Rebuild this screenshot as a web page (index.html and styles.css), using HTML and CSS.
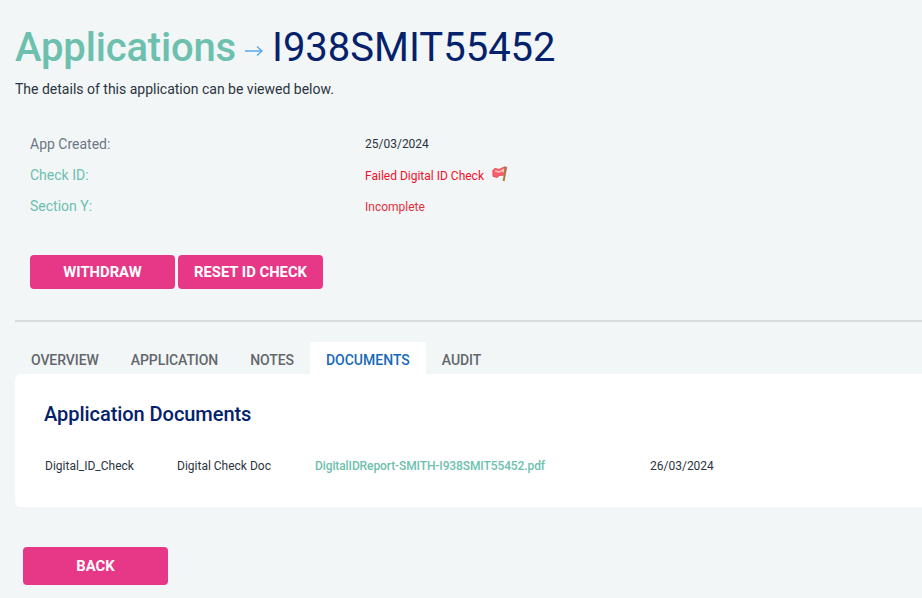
FILE: index.html
```html
<!DOCTYPE html>
<html lang="en">
<head>
<meta charset="utf-8">
<title>Application I938SMIT55452</title>
<link rel="stylesheet" href="styles.css">
</head>
<body>
<main class="page">
  <header class="head">
    <h1 class="title"><span class="crumb">Applications</span><svg class="arrow" viewBox="0 0 18 12" width="18" height="12" aria-hidden="true"><path d="M0 6H17M12 1.5L17 6L12 10.5" fill="none" stroke="#5aa9ea" stroke-width="1.4"/></svg><span class="ref">I938SMIT55452</span></h1>
    <p class="intro">The details of this application can be viewed below.</p>
  </header>
  <dl class="details">
    <div class="row"><dt class="label">App Created:</dt><dd class="value">25/03/2024</dd></div>
    <div class="row"><dt class="label teal">Check ID:</dt><dd class="value red">Failed Digital ID Check<svg class="flag" viewBox="0 0 16 16" width="16" height="16" aria-hidden="true"><path d="M.8 4.5L2.8 2.4L7 3.4L13 .8L12.4 9L7.5 9.6L5 11.4L1 10.4Z" fill="#f7636c" stroke="#e5404a" stroke-width=".8"/><path d="M3.2 5L7.2 6L11.4 3.6L11 6.4" stroke="#ffc4c4" stroke-width="1.4" fill="none"/><path d="M11.6 15L14.2 .8" stroke="#a97b42" stroke-width="2" fill="none"/></svg></dd></div>
    <div class="row"><dt class="label teal">Section Y:</dt><dd class="value red pending">Incomplete</dd></div>
  </dl>
  <div class="actions">
    <button class="btn" type="button">WITHDRAW</button>
    <button class="btn" type="button">RESET ID CHECK</button>
  </div>
  <hr class="rule">
  <nav class="tabs">
    <a class="tab">OVERVIEW</a>
    <a class="tab">APPLICATION</a>
    <a class="tab">NOTES</a>
    <a class="tab active">DOCUMENTS</a>
    <a class="tab">AUDIT</a>
  </nav>
  <section class="card">
    <h2 class="card-title">Application Documents</h2>
    <div class="doc">
      <span class="c1">Digital_ID_Check</span>
      <span class="c2">Digital Check Doc</span>
      <a class="c3">DigitalIDReport-SMITH-I938SMIT55452.pdf</a>
      <span class="c4">26/03/2024</span>
    </div>
  </section>
  <div class="back-wrap"><button class="btn back" type="button">BACK</button></div>
</main>
</body>
</html>
```
FILE: styles.css
```css
* { box-sizing: border-box; }
html, body { margin: 0; height: 100%; }
body { background: #f2f6f7; font-family: Roboto, sans-serif; color: #2b3440; overflow: hidden; }
.page { width: 922px; height: 598px; overflow: hidden; padding: 23px 0 0 15px; }
.title { margin: 0; display: flex; align-items: center; font-size: 40px; line-height: 50px; font-weight: 400; white-space: nowrap; }
.crumb { color: #6dbfae; font-weight: 500; letter-spacing: -0.17px; }
.arrow { margin: 5px 9px 0 9px; }
.ref { color: #04216b; }
.intro { margin: 7px 0 0; font-size: 14px; line-height: 18px; color: #2b3440; }
.details { margin: 30px 0 0 15px; }
.row { display: flex; height: 31px; align-items: center; margin: 0; }
.label { width: 335px; font-size: 14px; color: #6c7684; }
.teal { color: #6dbfae; }
.value { margin: 0; font-size: 12px; color: #2b3440; display: flex; align-items: center; }
.red { color: #f0102a; padding-top: 2px; }
.pending { color: #e0303f; }
.flag { margin-left: 8px; margin-top: -3px; }
.actions { display: flex; gap: 3px; margin: 34px 0 0 15px; }
.btn { width: 145px; height: 34px; padding: 0; border: 0; border-radius: 4px; background: #e73787; color: #fff; font: 700 14.8px Roboto, sans-serif; }
.rule { margin: 31px 0 0; height: 2px; border: 0; background: #dbdcde; width: 907px; }
.tabs { display: flex; margin-top: 20px; height: 32px; }
.tab { padding: 0 16px; line-height: 36px; font-size: 14px; font-weight: 500; letter-spacing: -0.08px; color: #62676d; }
.tab.active { background: #fff; color: #1769b8; letter-spacing: 0; }
.card { position: relative; width: 920px; height: 133px; background: #fff; border-radius: 6px 0 0 6px; padding: 28px 0 0 29px; }
.card-title { margin: 0; font-size: 20px; line-height: 24px; font-weight: 500; letter-spacing: -0.05px; color: #04216b; }
.doc { display: flex; margin-top: 32px; font-size: 12px; line-height: 16px; color: #2b3440; padding-left: 1px; }
.c1 { width: 132px; }
.c2 { width: 138px; }
.c3 { width: 335px; color: #6dbfae; font-weight: 500; letter-spacing: -0.1px; }
.back-wrap { margin: 40px 0 0 8px; }
.back { height: 38px; }
```
